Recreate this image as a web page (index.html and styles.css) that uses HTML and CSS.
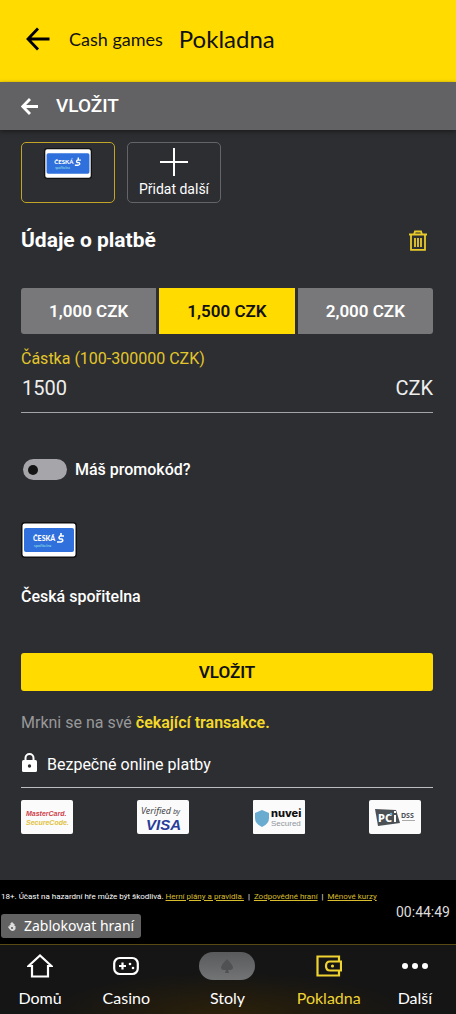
FILE: index.html
```html
<!DOCTYPE html>
<html lang="cs">
<head>
<meta charset="utf-8">
<meta name="viewport" content="width=device-width, initial-scale=1">
<title>Pokladna</title>
<link rel="stylesheet" href="styles.css">
</head>
<body>
<header class="topbar">
  <button class="icon-button" type="button" aria-label="Zpět"><svg width="24" height="24" viewBox="0 0 24 24" fill="none" stroke="#000" stroke-width="2.800"><path d="M23.500 12H2M12 1.500 2 12l10 10.500"/></svg></button>
  <a class="topbar-link" href="#">Cash games</a>
  <h1 class="topbar-title">Pokladna</h1>
</header>
<div class="subbar">
  <button class="icon-button" type="button" aria-label="Zpět"><svg width="17" height="17" viewBox="0 0 17 17" fill="none" stroke="#fff" stroke-width="2.800"><path d="M17 8.500H2M9 1 1.700 8.500 9 16"/></svg></button>
  <h2 class="subbar-title">VLOŽIT</h2>
</div>
<main class="content">
  <div class="methods">
    <button class="method method-active" type="button" aria-label="Česká spořitelna">
      <svg class="bank-small" viewBox="0 0 56 36"><rect x=".75" y=".75" width="54.500" height="34.500" rx="3" fill="#fff" stroke="#111" stroke-width="1.500"/><rect x="3" y="6" width="50" height="24" rx="2" fill="#2f70dd"/><text class="logo-text" x="12" y="19" font-size="7" font-weight="900" fill="#fff">ČESKÁ</text><text class="logo-text" x="13" y="25" font-size="4" fill="#9be3e5">spořitelna</text><path d="M43 14h-4q-2 2 0 3h2q2 2-1 3h-4M40 11v3" fill="none" stroke="#fff" stroke-width="1.600"/></svg>
    </button>
    <button class="method" type="button">
      <svg width="28" height="28" viewBox="0 0 28 28" stroke="#fff" stroke-width="2"><path d="M14 0v28M0 14h28"/></svg>
      <span>Přidat další</span>
    </button>
  </div>
  <div class="section-head">
    <h3 class="section-title">Údaje o platbě</h3>
    <button class="icon-button" type="button" aria-label="Smazat"><svg width="18" height="21" viewBox="0 0 18 21" fill="none" stroke="#e8cb2b" stroke-width="1.800"><path d="M0 4.500h18M5 4.500 6 1.500h6l1 3M2 5v14.800h14V5M6 8v9M9 8v9M12 8v9"/></svg></button>
  </div>
  <div class="amounts">
    <button class="amount" type="button">1,000 CZK</button>
    <button class="amount amount-active" type="button">1,500 CZK</button>
    <button class="amount" type="button">2,000 CZK</button>
  </div>
  <label class="field-label" for="amount">Částka (100-300000 CZK)</label>
  <div class="field">
    <input class="field-input" id="amount" type="text" inputmode="numeric" value="1500">
    <span>CZK</span>
  </div>
  <label class="promo"><input class="switch" type="checkbox" role="switch"><span>Máš promokód?</span></label>
  <svg class="bank" viewBox="0 0 56 36" role="img" aria-label="Česká spořitelna"><rect x=".75" y=".75" width="54.500" height="34.500" rx="3" fill="#fff" stroke="#111" stroke-width="1.500"/><rect x="3" y="6" width="50" height="24" rx="2" fill="#2f70dd"/><text class="logo-text" x="12" y="19" font-size="7" font-weight="900" fill="#fff">ČESKÁ</text><text class="logo-text" x="13" y="25" font-size="4" fill="#9be3e5">spořitelna</text><path d="M43 14h-4q-2 2 0 3h2q2 2-1 3h-4M40 11v3" fill="none" stroke="#fff" stroke-width="1.600"/></svg>
  <p class="bank-name">Česká spořitelna</p>
  <button class="submit" type="button">VLOŽIT</button>
  <p class="pending">Mrkni se na své <a href="#">čekající transakce.</a></p>
  <p class="secure"><svg width="17" height="20" viewBox="0 0 17 20"><path d="M4.500 8V5a4 4 0 0 1 8 0v3" fill="none" stroke="#fff" stroke-width="2"/><rect x="1" y="7" width="15" height="12" rx="1.500" fill="#fff"/><circle cx="8.500" cy="13" r="1.700" fill="#2d2e31"/></svg><span>Bezpečné online platby</span></p>
  <div class="badges">
    <svg class="badge" viewBox="0 0 52 34"><rect width="52" height="34" rx="2" fill="#fafbfa"/><g class="arial" font-size="7" font-style="italic" font-weight="700"><text x="5" y="16" fill="#d0414b">MasterCard.</text><text x="5" y="25" fill="#e2c23e">SecureCode.</text></g></svg>
    <svg class="badge" viewBox="0 0 52 34"><rect width="52" height="34" rx="2" fill="#fafbfa"/><text class="noto" x="4" y="14" font-size="9" font-style="italic" fill="#45464d">Verified<tspan font-size="7"> by</tspan></text><text class="arial" x="9" y="30" font-size="15" font-style="italic" font-weight="700" fill="#293c9b">VISA</text></svg>
    <svg class="badge" viewBox="0 0 52 34"><rect width="52" height="34" rx="1" fill="#fafbfa"/><path d="M9 10 16 13v5q0 6-7 9-7-3-7-9v-5Z" fill="#69acd0"/><text class="inter" x="18" y="17" font-size="11" font-weight="800" fill="#111">nuvei</text><text class="arial" x="18" y="26" font-size="8" fill="#8f959d">Secured</text></svg>
    <svg class="badge" viewBox="0 0 52 34"><rect width="52" height="34" rx="2" fill="#fafbfa"/><path d="m6 9 21 1 4 13-22 3Z" fill="#4b5055"/><text class="noto" x="9" y="22" font-size="11" font-weight="800" fill="#fff">PC</text><path d="M26 15v7M26 11v2" stroke="#fff" stroke-width="2"/><circle cx="22" cy="14" r="1.300" fill="#69acd0"/><text class="noto" x="32" y="18" font-size="7" font-weight="700" fill="#4b5055">DSS</text><path d="M33 20.500h13" stroke="#aaa"/></svg>
  </div>
</main>
<footer class="legal">
  <p class="legal-text">18+. Účast na hazardní hře může být škodlivá. <a href="#">Herní plány a pravidla.</a> <span class="bar">|</span> <a href="#">Zodpovědné hraní</a> <span class="bar">|</span> <a href="#">Měnové kurzy</a></p>
  <div class="legal-row">
    <button class="block" type="button"><svg width="8" height="9" viewBox="0 0 8 9" fill="#ddd"><path d="M1.500 5V3h1V1h1V0h1v1h1v1h1v2h1v3q-1 2-3 2T0 5l1-1Z"/><path d="M3 5h2v2H3Z" fill="#777"/></svg>Zablokovat hraní</button>
    <time class="timer">00:44:49</time>
  </div>
</footer>
<nav class="nav">
  <a class="nav-item" href="#"><svg width="26" height="24" viewBox="0 0 26 24" fill="none" stroke="#fff" stroke-width="2.200"><path d="M1.500 12 13 1.500 24.500 12H21v10.500H5V12Z"/></svg><span>Domů</span></a>
  <a class="nav-item" href="#"><svg width="26" height="24" viewBox="0 0 26 24" fill="none" stroke="#fff" stroke-width="2.200"><rect x="1.200" y="4" width="23.600" height="16" rx="5.500"/><path d="M6 12h7M9.500 8.500v7"/><circle cx="17" cy="10" r="1.300" fill="#fff" stroke="none"/><circle cx="20" cy="14" r="1.300" fill="#fff" stroke="none"/></svg><span>Casino</span></a>
  <a class="nav-item" href="#"><span class="pill"><svg width="16" height="16" viewBox="0 0 16 16" fill="#505153"><path d="M8 1q5 5 6 8 0 3-3 3H9l1 3H6l1-3H5q-3 0-3-3 1-3 6-8Z"/></svg></span><span>Stoly</span></a>
  <a class="nav-item nav-current" href="#"><svg width="26" height="24" viewBox="0 0 26 24" fill="none" stroke="#efd331" stroke-width="2.200"><path d="M23 7V2.500H1.500v19H23V17M25 7.500H14q-4 0-4 4.500t4 4.500h11Z"/><circle cx="16.500" cy="12" r="1.600" fill="#efd331" stroke="none"/></svg><span>Pokladna</span></a>
  <a class="nav-item" href="#"><svg width="26" height="24" viewBox="0 0 26 24" fill="#fff"><circle cx="3" cy="12" r="3"/><circle cx="13" cy="12" r="3"/><circle cx="23" cy="12" r="3"/></svg><span>Další</span></a>
</nav>
</body>
</html>
```
FILE: styles.css
```css
* { box-sizing: border-box; }
body { margin: 0; background: #2d2e31; color: #fff; font-family: Roboto, sans-serif; font-size: 16px; line-height: 20px; }
h1, h2, h3, p { margin: 0; }
button { font: inherit; color: inherit; border: 0; cursor: pointer; }
svg { display: block; flex: none; }
.icon-button { background: none; padding: 0; }
.topbar { display: flex; align-items: center; height: 82px; padding: 0 24px 4px 26px; background: #ffdb00; color: #111; font-family: Lato, sans-serif; }
.topbar-link { margin-left: 19px; color: inherit; font-size: 18px; text-decoration: none; }
.topbar-title { margin-left: 16px; font-size: 24px; line-height: 28px; font-weight: 400; }
.subbar { display: flex; align-items: center; gap: 18px; height: 48px; padding: 0 21px; background: #626264; box-shadow: 0 2px 4px #1d1e20; }
.subbar-title { font-size: 19px; font-weight: 500; }
.content { padding: 12px 23px 46px 21px; }
.methods { display: flex; gap: 12px; }
.method { display: flex; flex-direction: column; align-items: center; width: 94px; height: 61px; padding: 5px 0; border: 1px solid #646568; border-radius: 5px; background: none; font-size: 14px; line-height: 26px; white-space: nowrap; }
.method-active { border-color: #c2a526; }
.bank-small { width: 48px; height: 31px; }
.bank { width: 56px; height: 36px; margin-top: 42px; }
.logo-text { font-family: Lato, sans-serif; }
.noto { font-family: "Noto Sans", sans-serif; }
.arial { font-family: "Liberation Sans", sans-serif; }
.inter { font-family: Inter, sans-serif; }
.section-head { display: flex; justify-content: space-between; align-items: center; padding: 24px 6px 0 0; }
.section-title { font-size: 21px; line-height: 26px; font-weight: 700; }
.amounts { display: grid; grid-template-columns: repeat(3, 1fr); gap: 3px; margin-top: 35px; }
.amount { height: 46px; padding: 0; background: #78787a; font-size: 17px; font-weight: 600; }
.amount:first-child { border-radius: 3px 0 0 3px; }
.amount:last-child { border-radius: 0 3px 3px 0; }
.amount-active { background: #ffdb00; color: #111; }
.field-label { display: block; margin-top: 15px; color: #e3c62b; }
.field { display: flex; align-items: center; justify-content: space-between; height: 44px; padding-bottom: 6px; border-bottom: 1px solid #a4a4a6; color: #eee; font-size: 20px; }
.field-input { flex: 1; min-width: 0; padding: 0 1px; border: 0; background: none; color: inherit; font: inherit; outline: 0; }
.promo { display: flex; align-items: center; gap: 8px; margin: 46px 0 0 2px; font-weight: 500; }
.switch { appearance: none; display: flex; align-items: center; width: 44px; height: 21px; margin: 0; padding: 0 5px; border-radius: 11px; background: #a6a5aa; }
.switch::before { content: ""; width: 10px; height: 10px; border-radius: 50%; background: #141414; }
.switch:checked { justify-content: flex-end; }
.bank-name { margin-top: 29px; font-weight: 500; }
.submit { display: block; width: 100%; height: 38px; margin-top: 46px; border-radius: 3px; background: #ffdb00; color: #111; font-size: 17px; font-weight: 600; }
.pending { margin-top: 22px; color: #98989a; }
.pending a { color: #f4d92b; font-weight: 600; text-decoration: none; }
.secure { display: flex; align-items: center; gap: 9px; padding: 18px 0 12px; border-bottom: 1px solid #bdbdbf; }
.secure span { padding-top: 4px; }
.badges { display: flex; justify-content: space-between; padding: 12px 12px 0 0; }
.badge { width: 52px; height: 34px; }
.legal { height: 64px; padding: 10px 6px 0 1px; background: #000; }
.legal-text { font-size: 8px; line-height: 14px; }
.legal a { color: #d8bd2c; }
.bar { margin: 0 2px; }
.legal-row { display: flex; justify-content: space-between; align-items: flex-start; }
.block { display: flex; align-items: center; gap: 8px; height: 24px; margin-top: 10px; padding: 0 7px; border-radius: 3px; background: #626262; font-family: "Noto Sans", sans-serif; font-size: 14px; }
.timer { font-size: 14px; line-height: 16px; color: #ddd; }
.nav { display: grid; grid-template-columns: 80fr 92fr 110fr 92fr 80fr; height: 70px; padding: 9px 1px 0 0; border-top: 1px solid #574a12; background: radial-gradient(ellipse 40% 60% at 50% 100%, #2b2009, #151515); font-family: Lato, sans-serif; }
.nav-item { display: flex; flex-direction: column; align-items: center; gap: 10px; color: #fff; text-decoration: none; }
.nav-current { color: #efd331; }
.pill { display: flex; align-items: center; justify-content: center; width: 56px; height: 28px; margin: -2px 0; border-radius: 14px; background: linear-gradient(#595a5c, #737476); }
```
